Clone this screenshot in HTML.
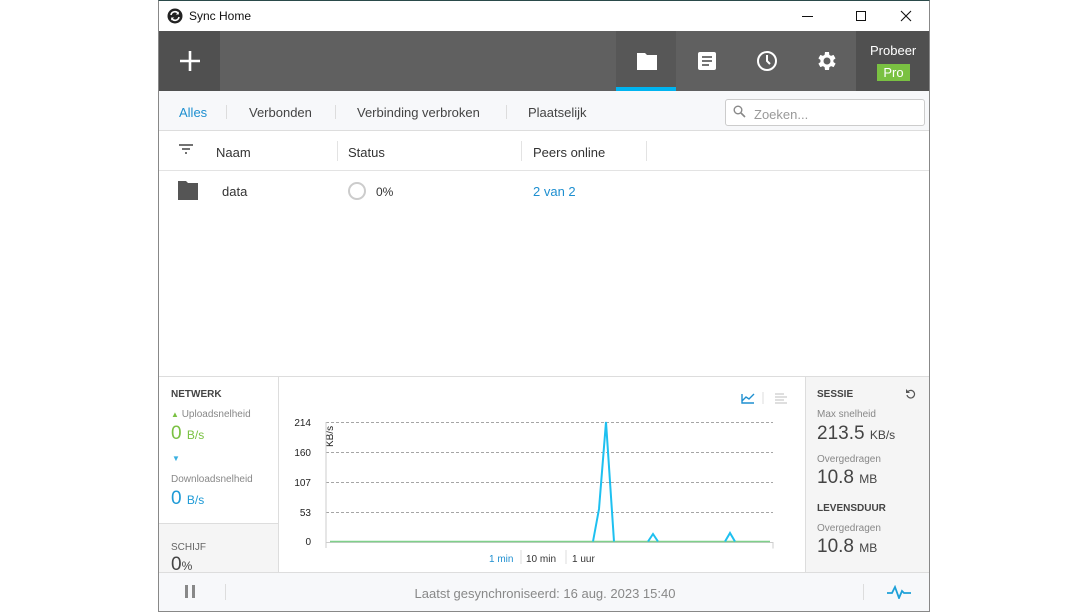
<!DOCTYPE html>
<html><head><meta charset="utf-8"><style>
*{box-sizing:border-box;margin:0;padding:0}
body{width:1088px;height:612px;background:#fff;position:relative;overflow:hidden;font-family:"Liberation Sans",sans-serif;color:#333}
.a{position:absolute}
.win{left:158px;top:0;width:772px;height:612px;border:1px solid #888;border-top:1px solid #2a4a4a;background:#fff;overflow:hidden}
.t{font-size:13px}
</style></head><body>
<div class="a win">
 <svg class="a" style="left:8px;top:7px" width="16" height="16" viewBox="0 0 16 16"><circle cx="8" cy="8" r="7.5" fill="#222"/><path d="M4 7a4 4 0 0 1 7.3-1.5M12 9a4 4 0 0 1-7.3 1.5" stroke="#fff" stroke-width="1.6" fill="none"/><path d="M11.8 3.5v3h-3z M4.2 12.5v-3h3z" fill="#fff"/></svg>
 <div class="a" style="left:30px;top:8px;font-size:12px;color:#111">Sync Home</div>
 <div class="a" style="left:643px;top:15px;width:11px;height:1px;background:#111"></div>
 <div class="a" style="left:697px;top:10px;width:10px;height:10px;border:1px solid #111"></div>
 <svg class="a" style="left:741px;top:9px" width="12" height="12"><path d="M1 1L11 11M11 1L1 11" stroke="#111" stroke-width="1.1"/></svg>
 <div class="a" style="left:0;top:30px;width:772px;height:60px;background:#606060"></div>
 <div class="a" style="left:0;top:30px;width:61px;height:60px;background:#505050"></div>
 <svg class="a" style="left:21px;top:50px" width="20" height="20"><path d="M10 0v20M0 10h20" stroke="#fff" stroke-width="2.6"/></svg>
 <div class="a" style="left:457px;top:30px;width:60px;height:60px;background:#575757"></div>
 <div class="a" style="left:457px;top:86px;width:60px;height:4px;background:#00b4f0"></div>
 <svg class="a" style="left:478px;top:51px" width="20" height="18"><path d="M0 1h8l2 2h10v15H0z" fill="#fff"/></svg>
 <svg class="a" style="left:538px;top:50px" width="20" height="20"><rect x="1" y="1" width="18" height="18" rx="2" fill="#fff"/><path d="M5 6h10M5 10h10M5 14h7" stroke="#606060" stroke-width="1.8"/></svg>
 <svg class="a" style="left:597px;top:49px" width="22" height="22"><circle cx="11" cy="11" r="9" fill="none" stroke="#fff" stroke-width="2"/><path d="M11 5v6l3 3" stroke="#fff" stroke-width="2" fill="none"/></svg>
 <svg class="a" style="left:656px;top:48px" width="24" height="24" viewBox="0 0 24 24"><path fill="#fff" d="M19.4 13a7.5 7.5 0 0 0 0-2l2.1-1.6-2-3.5-2.5 1a7 7 0 0 0-1.7-1L15 3h-4l-.4 2.9a7 7 0 0 0-1.7 1l-2.5-1-2 3.5L6.5 11a7.5 7.5 0 0 0 0 2l-2.1 1.6 2 3.5 2.5-1a7 7 0 0 0 1.7 1L11 21h4l.4-2.9a7 7 0 0 0 1.7-1l2.5 1 2-3.5zM13 15.5a3.5 3.5 0 1 1 0-7 3.5 3.5 0 0 1 0 7z" transform="translate(-1 0)"/></svg>
 <div class="a" style="left:697px;top:30px;width:75px;height:60px;background:#505050"></div>
 <div class="a" style="left:711px;top:42px;font-size:13px;color:#fff">Probeer</div>
 <div class="a" style="left:718px;top:63px;width:33px;height:17px;background:#7ac142;color:#fff;font-size:13px;text-align:center;line-height:17px">Pro</div>
 <div class="a" style="left:0;top:90px;width:772px;height:40px;background:#f7f8fa;border-bottom:1px solid #ddd"></div>
 <div class="a t" style="left:20px;top:104px;color:#1e8fd0">Alles</div>
 <div class="a" style="left:67px;top:104px;width:1px;height:14px;background:#ddd"></div>
 <div class="a t" style="left:90px;top:104px;color:#444">Verbonden</div>
 <div class="a" style="left:176px;top:104px;width:1px;height:14px;background:#ddd"></div>
 <div class="a t" style="left:198px;top:104px;color:#444">Verbinding verbroken</div>
 <div class="a" style="left:347px;top:104px;width:1px;height:14px;background:#ddd"></div>
 <div class="a t" style="left:369px;top:104px;color:#444">Plaatselijk</div>
 <div class="a" style="left:566px;top:98px;width:200px;height:27px;border:1px solid #ccc;border-radius:3px;background:#fff"></div>
 <svg class="a" style="left:574px;top:104px" width="13" height="13"><circle cx="5" cy="5" r="3.8" fill="none" stroke="#888" stroke-width="1.4"/><path d="M8 8l4 4" stroke="#888" stroke-width="1.6"/></svg>
 <div class="a t" style="left:595px;top:106px;color:#999">Zoeken...</div>
 <div class="a" style="left:0;top:130px;width:772px;height:40px;border-bottom:1px solid #e3e3e3"></div>
 <svg class="a" style="left:20px;top:143px" width="14" height="12"><path d="M0 1h14M3 5h8M6 9h2" stroke="#444" stroke-width="1.6"/></svg>
 <div class="a t" style="left:57px;top:144px">Naam</div>
 <div class="a" style="left:178px;top:140px;width:1px;height:20px;background:#e3e3e3"></div>
 <div class="a t" style="left:189px;top:144px">Status</div>
 <div class="a" style="left:362px;top:140px;width:1px;height:20px;background:#e3e3e3"></div>
 <div class="a t" style="left:374px;top:144px">Peers online</div>
 <div class="a" style="left:487px;top:140px;width:1px;height:20px;background:#e3e3e3"></div>
 <svg class="a" style="left:19px;top:180px" width="20" height="19"><path d="M0 0h8l2 2h10v17H0z" fill="#555"/></svg>
 <div class="a t" style="left:63px;top:183px">data</div>
 <div class="a" style="left:189px;top:181px;width:18px;height:18px;border:2px solid #ccc;border-radius:50%"></div>
 <div class="a" style="left:217px;top:184px;font-size:12px">0%</div>
 <div class="a t" style="left:374px;top:183px;color:#1e8fd0">2 van 2</div>
 <div class="a" style="left:0;top:375px;width:772px;height:196px;border-top:1px solid #ddd"></div>
 <div class="a" style="left:0;top:376px;width:120px;height:147px;border-right:1px solid #ddd;border-bottom:1px solid #ddd"></div>
 <div class="a" style="left:0;top:523px;width:120px;height:48px;background:#f5f5f5;border-right:1px solid #ddd"></div>
 <div class="a" style="left:12px;top:388px;font-size:10px;font-weight:bold;color:#444">NETWERK</div>
 <div class="a" style="left:12px;top:408px;font-size:10px;color:#888"><span style="color:#7ac142;font-size:8px">▲</span> Uploadsnelheid</div>
 <div class="a" style="left:12px;top:422px;font-size:19px;color:#7ac142">0 <span style="font-size:12px">B/s</span></div>
 <div class="a" style="left:13px;top:453px;font-size:8px;color:#3ab0e0">▼</div>
 <div class="a" style="left:12px;top:473px;font-size:10px;color:#888">Downloadsnelheid</div>
 <div class="a" style="left:12px;top:487px;font-size:19px;color:#1e9ad6">0 <span style="font-size:12px">B/s</span></div>
 <div class="a" style="left:12px;top:541px;font-size:10px;color:#666">SCHIJF</div>
 <div class="a" style="left:12px;top:553px;font-size:19px;color:#444">0<span style="font-size:12px">%</span></div>
 <svg class="a" style="left:120px;top:376px" width="527" height="195">
  <path d="M463 17v9h12M463 24l4-4 3 2 5-5" stroke="#1e8fd0" stroke-width="1.4" fill="none"/>
  <path d="M484 15v12" stroke="#ddd"/>
  <path d="M496 17h9M496 20h12M496 23h9M496 26h12" stroke="#ccc" stroke-width="1.2"/>
  <g font-size="10" fill="#222" text-anchor="end" font-family="Liberation Sans">
   <text x="32" y="49">214</text><text x="32" y="79">160</text><text x="32" y="109">107</text><text x="32" y="139">53</text><text x="32" y="168">0</text></g>
  <text transform="translate(54 70) rotate(-90)" font-size="10" fill="#222" font-family="Liberation Sans">KB/s</text>
  <g stroke="#888" stroke-dasharray="3 2" stroke-width="0.8"><path d="M47 45.5h447M47 75.5h447M47 105.5h447M47 135.5h447"/></g>
  <path d="M47 45v126M47 165.5h447v6" stroke="#ccc" fill="none"/>
  <path d="M51 164.5h440" stroke="#7fd08a" stroke-width="1.5"/>
  <path d="M314 164.5L320 132L327 45L335 164.5M369 164.5L374 157L379 164.5M446 164.5L451 156L456 164.5" stroke="#1ec0f0" stroke-width="2" fill="none"/>
  <g font-size="10" font-family="Liberation Sans"><text x="210" y="185" fill="#1e8fd0">1 min</text><text x="247" y="185" fill="#333">10 min</text><text x="293" y="185" fill="#333">1 uur</text></g>
  <path d="M242 173v14M287 173v14" stroke="#ddd"/>
 </svg>
 <div class="a" style="left:646px;top:376px;width:126px;height:195px;background:#f5f5f5;border-left:1px solid #ddd"></div>
 <div class="a" style="left:658px;top:388px;font-size:10px;font-weight:bold;color:#444">SESSIE</div>
 <svg class="a" style="left:746px;top:387px" width="11" height="11"><path d="M3 3.5A3.8 3.8 0 1 1 2 7" stroke="#555" stroke-width="1.2" fill="none"/><path d="M1 1v4h4z" fill="#555"/></svg>
 <div class="a" style="left:658px;top:408px;font-size:10px;color:#888">Max snelheid</div>
 <div class="a" style="left:658px;top:422px;font-size:19px;color:#444">213.5 <span style="font-size:12px">KB/s</span></div>
 <div class="a" style="left:658px;top:453px;font-size:10px;color:#888">Overgedragen</div>
 <div class="a" style="left:658px;top:466px;font-size:19px;color:#444">10.8 <span style="font-size:12px">MB</span></div>
 <div class="a" style="left:658px;top:502px;font-size:10px;font-weight:bold;color:#444">LEVENSDUUR</div>
 <div class="a" style="left:658px;top:522px;font-size:10px;color:#888">Overgedragen</div>
 <div class="a" style="left:658px;top:535px;font-size:19px;color:#444">10.8 <span style="font-size:12px">MB</span></div>
 <div class="a" style="left:0;top:571px;width:772px;height:41px;background:#f7f8fa;border-top:1px solid #ddd"></div>
 <div class="a" style="left:26px;top:584px;width:3px;height:13px;background:#888"></div>
 <div class="a" style="left:33px;top:584px;width:3px;height:13px;background:#888"></div>
 <div class="a" style="left:66px;top:583px;width:1px;height:16px;background:#ddd"></div>
 <div class="a" style="left:0;top:585px;width:772px;text-align:center;font-size:13px;color:#888">Laatst gesynchroniseerd: 16 aug. 2023 15:40</div>
 <div class="a" style="left:704px;top:583px;width:1px;height:16px;background:#ddd"></div>
 <svg class="a" style="left:728px;top:584px" width="24" height="14"><path d="M0 8h5l3-6 4 11 3-7 2 2h7" stroke="#1ea0d8" stroke-width="1.8" fill="none"/></svg>
</div>
</body></html>
